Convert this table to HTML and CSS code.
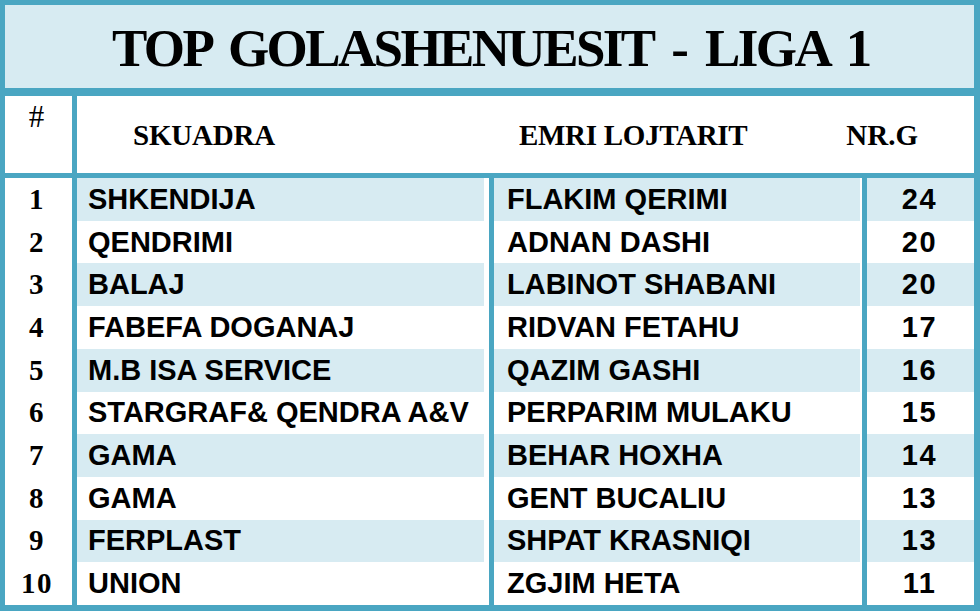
FILE: index.html
```html
<!DOCTYPE html>
<html lang="sq">
<head>
<meta charset="utf-8">
<title>Top Golashenuesit - Liga 1</title>
<link rel="stylesheet" href="styles.css">
</head>
<body>
<div class="board">
  <div class="title">TOP GOLASHENUESIT - LIGA 1</div>
  <div class="head">
    <div class="h-num">#</div>
    <div class="h-team">SKUADRA</div>
    <div class="h-player">EMRI LOJTARIT</div>
    <div class="h-goals">NR.G</div>
  </div>
  <div class="rows">
    <div class="row odd"><div class="num">1</div><div class="team">SHKENDIJA</div><div class="player">FLAKIM QERIMI</div><div class="goals">24</div></div>
    <div class="row"><div class="num">2</div><div class="team">QENDRIMI</div><div class="player">ADNAN DASHI</div><div class="goals">20</div></div>
    <div class="row odd"><div class="num">3</div><div class="team">BALAJ</div><div class="player">LABINOT SHABANI</div><div class="goals">20</div></div>
    <div class="row"><div class="num">4</div><div class="team">FABEFA DOGANAJ</div><div class="player">RIDVAN FETAHU</div><div class="goals">17</div></div>
    <div class="row odd"><div class="num">5</div><div class="team">M.B ISA SERVICE</div><div class="player">QAZIM GASHI</div><div class="goals">16</div></div>
    <div class="row"><div class="num">6</div><div class="team">STARGRAF&amp; QENDRA A&amp;V</div><div class="player">PERPARIM MULAKU</div><div class="goals">15</div></div>
    <div class="row odd"><div class="num">7</div><div class="team">GAMA</div><div class="player">BEHAR HOXHA</div><div class="goals">14</div></div>
    <div class="row"><div class="num">8</div><div class="team">GAMA</div><div class="player">GENT BUCALIU</div><div class="goals">13</div></div>
    <div class="row odd"><div class="num">9</div><div class="team">FERPLAST</div><div class="player">SHPAT KRASNIQI</div><div class="goals">13</div></div>
    <div class="row"><div class="num">10</div><div class="team">UNION</div><div class="player">ZGJIM HETA</div><div class="goals">11</div></div>
  </div>
</div>
</body>
</html>
```

FILE: styles.css
```css
* { box-sizing: border-box; }
html, body { margin: 0; padding: 0; background: #fff; }

.board {
  width: 980px;
  height: 611px;
  border: 5px solid #4aa6c2;
  border-right-width: 6px;
  border-bottom-width: 6px;
  display: flex;
  flex-direction: column;
  color: #000;
}

.title {
  height: 91px;
  flex: none;
  background: #d7ebf2;
  border-bottom: 8px solid #4aa6c2;
  display: flex;
  align-items: center;
  padding-left: 107px;
  padding-top: 2px;
  font-family: "Liberation Serif", serif;
  font-weight: bold;
  font-size: 53px;
  letter-spacing: -2.6px;
  word-spacing: 8px;
  white-space: pre;
}

.head {
  height: 82px;
  flex: none;
  border-bottom: 5px solid #4aa6c2;
  display: grid;
  grid-template-columns: 72px 417px 1fr 126px;
  font-family: "Liberation Serif", serif;
  font-weight: bold;
  font-size: 29px;
}

.h-num {
  border-right: 5px solid #4aa6c2;
  text-align: center;
  font-weight: normal;
  font-size: 31px;
  padding-top: 3px;
  padding-right: 4px;
}

.h-team, .h-player, .h-goals {
  display: flex;
  align-items: center;
  padding-top: 2px;
}
.h-team { padding-left: 56px; letter-spacing: -0.2px; }
.h-player { padding-left: 25px; letter-spacing: -0.3px; }
.h-goals { justify-content: flex-end; padding-right: 56px; }

.rows {
  flex: 1;
  display: flex;
  flex-direction: column;
}

.row {
  flex: 1;
  display: grid;
  grid-template-columns: 72px 417px 373px 1fr;
  font-family: "Liberation Sans", Arial, sans-serif;
  font-weight: bold;
  font-size: 29px;
}

.row > div {
  display: flex;
  align-items: center;
}

.num {
  border-right: 5px solid #4aa6c2;
  justify-content: center;
  padding-right: 3px;
  font-family: "Liberation Serif", serif;
  font-size: 29px;
  letter-spacing: 1.5px;
  background: #fff;
}

.team {
  border-right: 5px solid #4aa6c2;
  padding-left: 11px;
  box-shadow: inset -5px 0 0 #fff;
}

.player {
  border-right: 5px solid #4aa6c2;
  padding-left: 13px;
  box-shadow: inset -2px 0 0 #fff;
}

.goals {
  justify-content: center;
  padding-right: 2px;
  letter-spacing: 1.5px;
}

.odd .team, .odd .player, .odd .goals { background-color: #d7ebf2; }
```
